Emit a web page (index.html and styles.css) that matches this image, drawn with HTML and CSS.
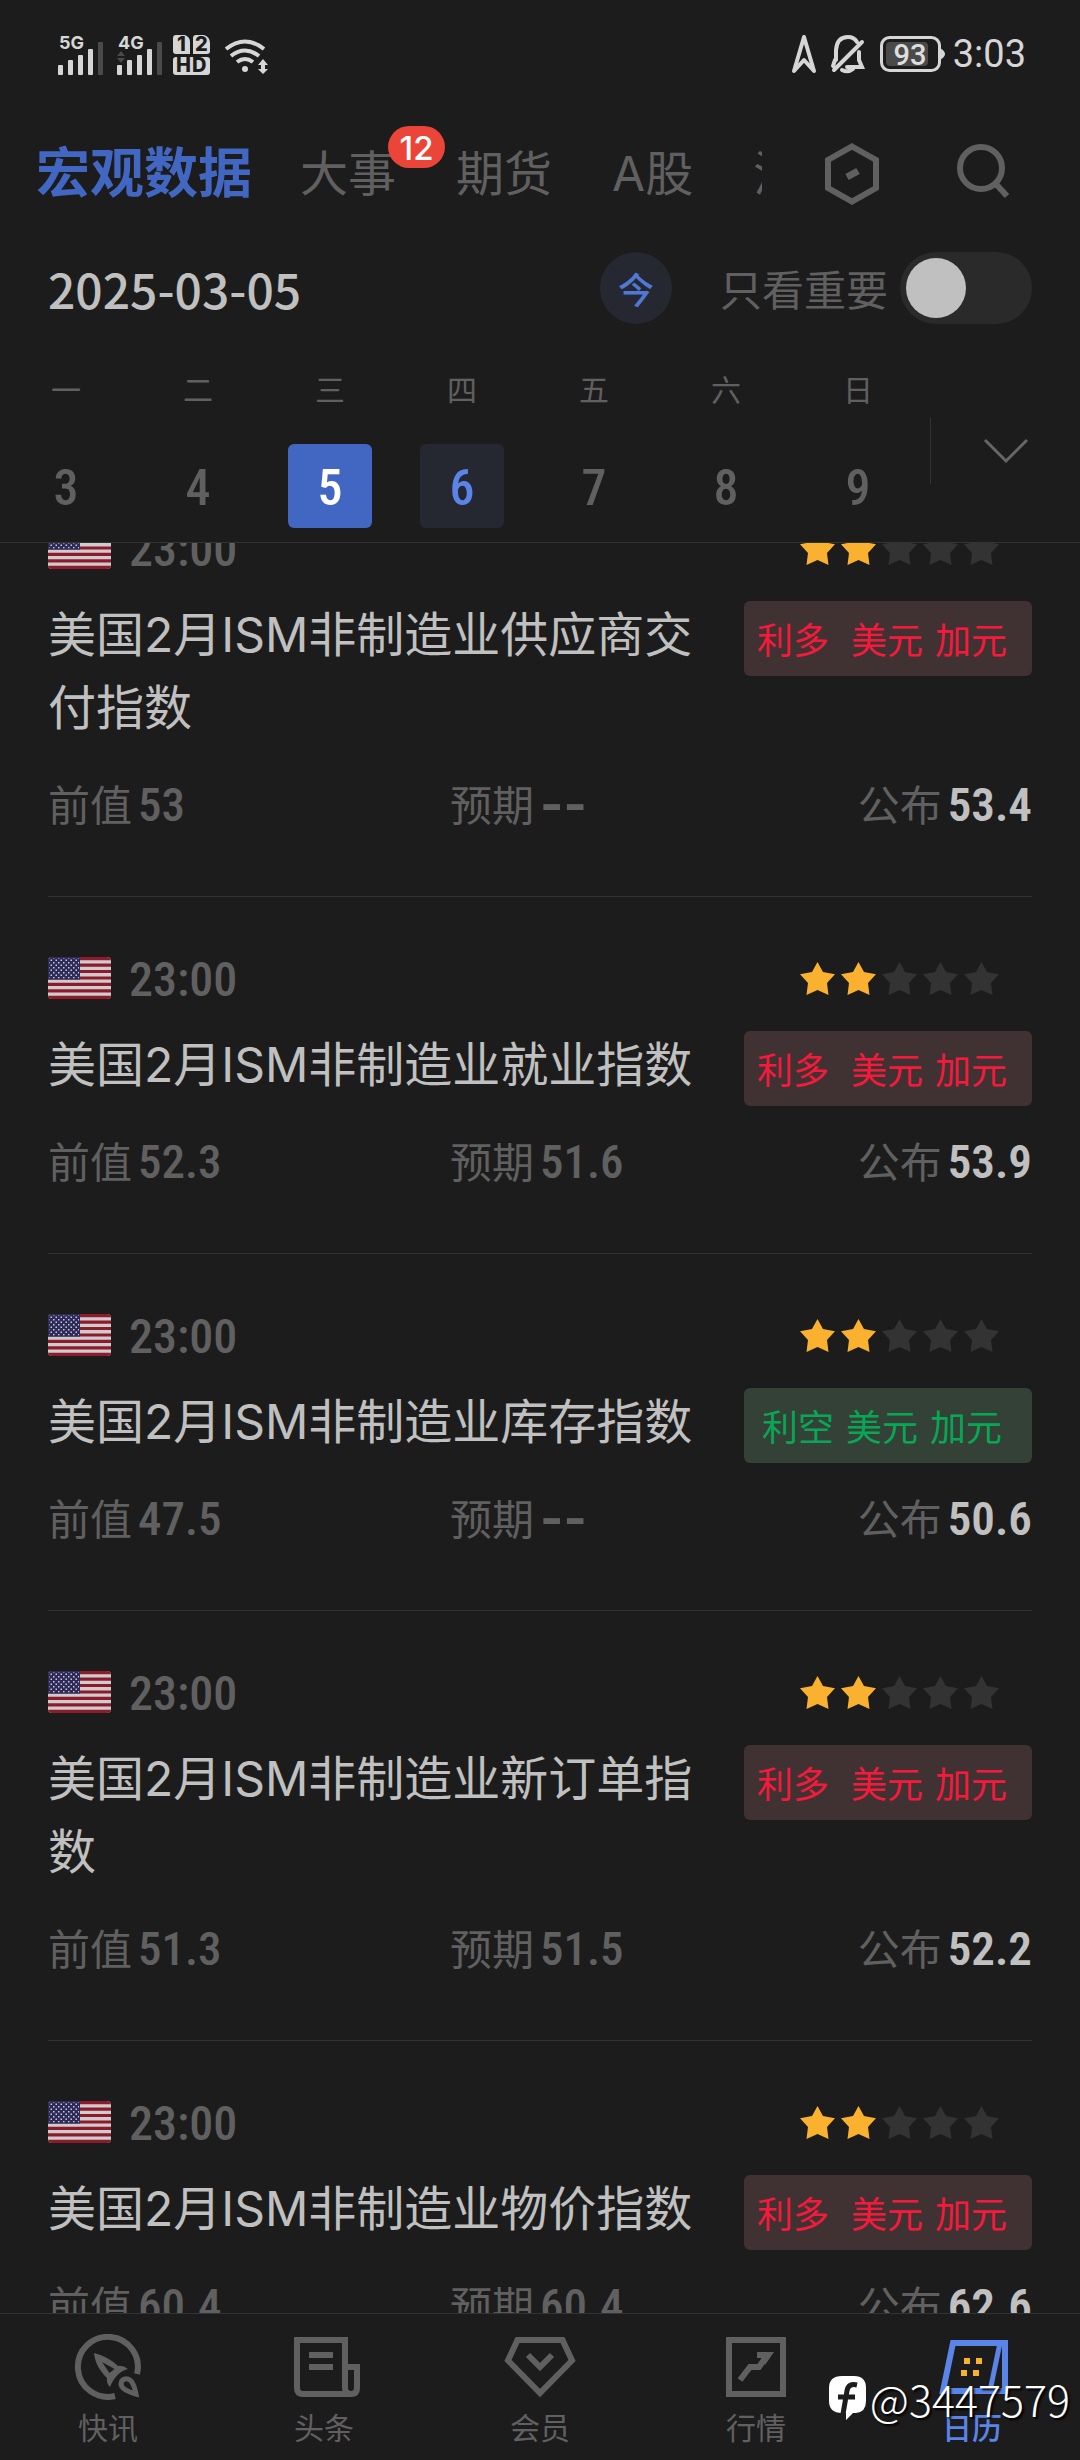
FILE: index.html
```html
<!DOCTYPE html>
<html lang="zh-CN">
<head>
<meta charset="utf-8">
<meta name="viewport" content="width=device-width, initial-scale=1">
<title>财经日历</title>
<link rel="stylesheet" href="styles.css">
</head>
<body>
<svg class="defs" aria-hidden="true">
  <defs>
    <pattern id="dots" width="5" height="5" patternUnits="userSpaceOnUse">
      <rect x="0" y="0" width="1.500" height="1.500" fill="#c9c8d4"/>
      <rect x="2.500" y="2.500" width="1.500" height="1.500" fill="#c9c8d4"/>
    </pattern>
    <symbol id="flag" viewBox="0 0 63 42">
      <rect width="63" height="42" fill="#cfcccf"/>
      <path fill="#8e1b2b" d="M0 0h63v3.2H0zM0 6.5h63v3.2H0zM0 12.9h63v3.2H0zM0 19.4h63v3.2H0zM0 25.8h63v3.2H0zM0 32.3h63v3.2H0zM0 38.8h63V42H0z"/>
      <rect width="32" height="22.6" fill="#2d2b59"/>
      <rect x="1" y="1" width="30" height="20.600" fill="url(#dots)"/>
    </symbol>
    <symbol id="star" viewBox="0 0 35 33">
      <path fill="currentColor" d="M17.500 0 23 10 35 12.300 27 21 28.500 33 17.500 28 6.500 33 8 21 0 12.300 12 10Z"/>
    </symbol>
    <symbol id="rating" viewBox="0 0 199 33">
      <use href="#star" x="0" width="35" height="33" color="#fab12f"/>
      <use href="#star" x="41" width="35" height="33" color="#fab12f"/>
      <use href="#star" x="82" width="35" height="33" color="#333"/>
      <use href="#star" x="123" width="35" height="33" color="#333"/>
      <use href="#star" x="164" width="35" height="33" color="#333"/>
    </symbol>
  </defs>
</svg>

<header class="header">
  <div class="status">
    <svg class="status-left" width="212" height="44" viewBox="0 0 212 44" aria-hidden="true">
      <g fill="#d6d6d6">
        <text class="net" x="1" y="17">5G</text>
        <rect x="0" y="33" width="5" height="10" rx="1"/><rect x="10" y="28" width="5" height="15" rx="1"/><rect x="20" y="23" width="5" height="20" rx="1"/><rect x="30" y="17" width="5" height="26" rx="1"/>
        <text class="net" x="60" y="17">4G</text>
        <rect x="59" y="33" width="5" height="10" rx="1"/><rect x="69" y="28" width="5" height="15" rx="1"/><rect x="79" y="23" width="5" height="20" rx="1"/><rect x="89" y="17" width="5" height="26" rx="1"/>
        <path d="M118 3h9q5 2 5 7v12h-14q-3 0-3-3V6q0-3 3-3zM138 3h8q6 2 6 8v8q0 3-3 3h-14V6q0-3 3-3z"/>
        <rect x="115" y="25" width="37" height="18" rx="3"/>
        <circle cx="187" cy="37" r="3"/>
        <path d="M205 27l5 6h-3v4h3l-5 5-5-5h3v-4h-3z"/>
      </g>
      <g fill="#4a4a4a"><rect x="40" y="10" width="5" height="33" rx="1"/><rect x="99" y="10" width="5" height="33" rx="1"/><path d="M63 19l4 5h-8zM63 31l4-5h-8z"/></g>
      <g fill="none" stroke="#d6d6d6" stroke-width="4"><path d="M168 17q19-15 38 0M173 24q14-11 28 0M179 30q8-6 16 0"/></g>
      <g class="sim" fill="#1c1c1c"><text x="119" y="19">1</text><text x="137" y="19">2</text><text x="118" y="40">H</text><text x="134" y="40">D</text></g>
    </svg>
    <div class="status-right">
      <svg width="24" height="38" viewBox="0 0 24 38" fill="none" stroke="#d6d6d6" stroke-width="4" stroke-linejoin="round" aria-hidden="true"><path d="M12 2 2 36l10-11 10 11z"/></svg>
      <svg width="34" height="38" viewBox="0 0 34 38" fill="none" stroke="#d6d6d6" stroke-width="4" stroke-linecap="round" aria-hidden="true"><path d="M5 25V15Q6 2 17 2q6 0 9 5M28 17v8l3 7H16M4 25l-2 6M3 35 31 7M11 35q6 3 11-1"/></svg>
      <svg width="64" height="38" viewBox="0 0 64 38" aria-hidden="true">
        <rect x="1.500" y="2.500" width="58" height="33" rx="8" fill="none" stroke="#d6d6d6" stroke-width="3"/>
        <rect x="6" y="7" width="42" height="24" rx="4" fill="#4a4a4a"/>
        <path d="M60 13q5 3 5 6t-5 6z" fill="#d6d6d6"/>
        <text class="battery" x="30" y="30" text-anchor="middle" fill="#dedede">93</text>
      </svg>
      <time class="clock">3:03</time>
    </div>
  </div>

  <div class="topbar">
    <nav class="tabs">
      <a class="tab tab-active" href="#macro">宏观数据</a>
      <a class="tab" href="#events">大事<span class="badge">12</span></a>
      <a class="tab" href="#futures">期货</a>
      <a class="tab" href="#a">A股</a>
      <a class="tab" href="#hs">沪深</a>
    </nav>
    <div class="actions">
      <button class="icon-btn" aria-label="设置"><svg width="66" height="66" viewBox="0 0 66 66" fill="none" stroke="#606060" stroke-width="6"><path d="M33 5.500 57 19v28L33 60.500 9 47V19z"/><path stroke-width="7" d="M28 36l11-6"/></svg></button>
      <button class="icon-btn" aria-label="搜索"><svg width="66" height="66" viewBox="0 0 66 66" fill="none" stroke="#606060" stroke-width="6"><circle cx="30" cy="27" r="21"/><path d="M44 42l12 13"/></svg></button>
    </div>
  </div>

  <div class="datebar">
    <time class="date" datetime="2025-03-05">2025-03-05</time>
    <button class="today">今</button>
    <label class="only" for="only">只看重要</label>
    <input class="switch" id="only" type="checkbox">
  </div>

  <div class="calendar">
    <div class="week">
      <div class="day"><span class="weekday">一</span><button class="num">3</button></div>
      <div class="day"><span class="weekday">二</span><button class="num">4</button></div>
      <div class="day"><span class="weekday">三</span><button class="num num-selected">5</button></div>
      <div class="day"><span class="weekday">四</span><button class="num num-today">6</button></div>
      <div class="day"><span class="weekday">五</span><button class="num">7</button></div>
      <div class="day"><span class="weekday">六</span><button class="num">8</button></div>
      <div class="day"><span class="weekday">日</span><button class="num">9</button></div>
    </div>
    <button class="expand" aria-label="展开"><svg width="46" height="26" viewBox="0 0 46 26" fill="none" stroke="#666" stroke-width="3"><path d="M2 2l21 21L44 2"/></svg></button>
  </div>
</header>

<main class="viewport">
  <div class="list">
    <article class="item">
      <div class="head"><svg class="flag" role="img" aria-label="美国"><use href="#flag"/></svg><time class="time">23:00</time><svg class="stars" role="img" aria-label="2"><use href="#rating"/></svg></div>
      <div class="body"><h2 class="title">美国2月ISM非制造业供应商交付指数</h2><div class="tag tag-up"><span class="verdict">利多</span><span>美元</span><span>加元</span></div></div>
      <dl class="meta"><div><dt>前值</dt><dd>53</dd></div><div><dt>预期</dt><dd class="none">--</dd></div><div class="actual"><dt>公布</dt><dd>53.4</dd></div></dl>
    </article>
    <article class="item">
      <div class="head"><svg class="flag" role="img" aria-label="美国"><use href="#flag"/></svg><time class="time">23:00</time><svg class="stars" role="img" aria-label="2"><use href="#rating"/></svg></div>
      <div class="body"><h2 class="title">美国2月ISM非制造业就业指数</h2><div class="tag tag-up"><span class="verdict">利多</span><span>美元</span><span>加元</span></div></div>
      <dl class="meta"><div><dt>前值</dt><dd>52.3</dd></div><div><dt>预期</dt><dd>51.6</dd></div><div class="actual"><dt>公布</dt><dd>53.9</dd></div></dl>
    </article>
    <article class="item">
      <div class="head"><svg class="flag" role="img" aria-label="美国"><use href="#flag"/></svg><time class="time">23:00</time><svg class="stars" role="img" aria-label="2"><use href="#rating"/></svg></div>
      <div class="body"><h2 class="title">美国2月ISM非制造业库存指数</h2><div class="tag tag-down"><span class="verdict">利空</span><span>美元</span><span>加元</span></div></div>
      <dl class="meta"><div><dt>前值</dt><dd>47.5</dd></div><div><dt>预期</dt><dd class="none">--</dd></div><div class="actual"><dt>公布</dt><dd>50.6</dd></div></dl>
    </article>
    <article class="item">
      <div class="head"><svg class="flag" role="img" aria-label="美国"><use href="#flag"/></svg><time class="time">23:00</time><svg class="stars" role="img" aria-label="2"><use href="#rating"/></svg></div>
      <div class="body"><h2 class="title">美国2月ISM非制造业新订单指数</h2><div class="tag tag-up"><span class="verdict">利多</span><span>美元</span><span>加元</span></div></div>
      <dl class="meta"><div><dt>前值</dt><dd>51.3</dd></div><div><dt>预期</dt><dd>51.5</dd></div><div class="actual"><dt>公布</dt><dd>52.2</dd></div></dl>
    </article>
    <article class="item">
      <div class="head"><svg class="flag" role="img" aria-label="美国"><use href="#flag"/></svg><time class="time">23:00</time><svg class="stars" role="img" aria-label="2"><use href="#rating"/></svg></div>
      <div class="body"><h2 class="title">美国2月ISM非制造业物价指数</h2><div class="tag tag-up"><span class="verdict">利多</span><span>美元</span><span>加元</span></div></div>
      <dl class="meta"><div><dt>前值</dt><dd>60.4</dd></div><div><dt>预期</dt><dd>60.4</dd></div><div class="actual"><dt>公布</dt><dd>62.6</dd></div></dl>
    </article>
  </div>
</main>

<nav class="dock">
  <a class="dock-item" href="#flash"><svg width="72" height="66" viewBox="0 0 72 66" fill="none" stroke="currentColor" stroke-width="6"><path d="M65 40A30 30 0 1 0 43 62"/><path fill="currentColor" fill-rule="evenodd" stroke="none" d="M22 19C33 22 41 27 46 32Q51 31 56 35C48 37 42 43 38 53Q34 49 35 44C29 38 23 30 22 19ZM30 28 37.500 39 42.500 35Z"/><path stroke-width="5" d="M64 60C57 58 49 55 49 50 49 45 55 43 59 47 62 50 63 55 64 60Z"/></svg><span>快讯</span></a>
  <a class="dock-item" href="#news"><svg width="72" height="66" viewBox="0 0 72 66" fill="none" stroke="currentColor" stroke-width="6"><path d="M9 6h48v48q0 6 6 6 6 0 6-6V33H57M9 3v51q0 6 6 6h48M21 21h24M21 33h24"/></svg><span>头条</span></a>
  <a class="dock-item" href="#member"><svg width="72" height="66" viewBox="0 0 72 66" fill="none" stroke="currentColor" stroke-width="6"><path d="M13.500 6h45l9.500 20.500L36 59 4 26.500zM24 21l12 12 12-12"/></svg><span>会员</span></a>
  <a class="dock-item" href="#quotes"><svg width="72" height="66" viewBox="0 0 72 66" fill="none" stroke="currentColor" stroke-width="6"><path d="M9 6h54v54H9zM20 46l10-13h9l7-10"/><path fill="currentColor" stroke="none" d="M37 18h17L45 31v-7h-8z"/></svg><span>行情</span></a>
  <a class="dock-item dock-active" href="#calendar"><svg width="72" height="66" viewBox="0 0 72 66" fill="none" stroke="currentColor" stroke-width="6"><path d="M69 6v51H7L17 9h52"/><path stroke-width="5" d="M64 9 54 57"/><path fill="#fab12f" stroke="none" d="M28 24h6v6h-6zM40 24h6v6h-6zM25 36h6v6h-6zM37 36h6v6h-6z"/></svg><span>日历</span></a>
  <div class="watermark"><svg width="37" height="44" viewBox="0 0 37 44" aria-hidden="true"><path fill="#fff" d="M13 0h12q12 0 12 12v13q0 11-10 12h-3l-7 7v-7h-4Q0 37 0 25V12Q0 0 13 0z"/><path fill="none" stroke="#1c1c1c" stroke-width="5" d="M28 9q-9-2-10 6l-4 23M9 21h17"/></svg><span>@3447579</span></div>
</nav>
</body>
</html>
```
FILE: styles.css
```css
* { box-sizing: border-box; }

body {
  margin: 0;
  min-height: 100vh;
  height: 100vh;
  display: flex;
  flex-direction: column;
  background: #1c1c1c;
  color: #606060;
  font-family: "Noto Sans CJK SC", sans-serif;
}

button {
  margin: 0;
  padding: 0;
  border: 0;
  background: none;
  color: inherit;
  font: inherit;
}

a { color: inherit; text-decoration: none; }
svg { display: block; }
.defs { position: absolute; width: 0; height: 0; }

.header { flex: none; border-bottom: 1px solid #333; }

/* Status bar */
.status {
  display: flex;
  justify-content: space-between;
  align-items: center;
  height: 108px;
  padding: 0 54px 0 58px;
}
.status-right { display: flex; align-items: center; gap: 15px; }
.status-right svg { overflow: visible; }
.net { font: 700 18px Inter, sans-serif; }
.sim { font: 800 20px Inter, sans-serif; }
.battery { font: 500 29px Roboto, sans-serif; }
.clock { font: 400 38px/44px Roboto, sans-serif; color: #d6d6d6; margin-left: -6px; }

/* Section tabs */
.topbar { display: flex; align-items: center; height: 132px; }
.tabs {
  display: flex;
  flex: 1;
  align-items: center;
  height: 132px;
  overflow: hidden;
  white-space: nowrap;
}
.tab {
  position: relative;
  flex: none;
  padding: 0 30px;
  font-family: Inter, "Noto Sans CJK SC", sans-serif;
  font-size: 48px;
  line-height: 76px;
}
.tab-active {
  padding: 0 18px 0 36px;
  font-size: 54px;
  font-weight: 700;
  color: #4267c2;
}
.badge {
  position: absolute;
  top: -10px;
  left: 118px;
  width: 57px;
  height: 42px;
  border-radius: 21px;
  background: #eb4439;
  color: #fff;
  font-size: 33px;
  font-weight: 500;
  line-height: 44px;
  text-align: center;
}
.actions { display: flex; gap: 66px; padding: 0 63px 0 57px; }

/* Date and filter */
.datebar {
  display: flex;
  align-items: center;
  height: 72px;
  margin-top: 12px;
  padding: 0 48px;
}
.date { font-size: 48px; font-weight: 500; line-height: 70px; color: #c0c0c0; }
.today {
  width: 72px;
  height: 72px;
  margin-left: auto;
  border-radius: 36px;
  background: #252831;
  color: #5079d6;
  font-size: 36px;
  font-weight: 500;
  line-height: 70px;
}
.only { margin: 0 12px 0 48px; font-size: 42px; line-height: 70px; }
.switch {
  appearance: none;
  display: flex;
  width: 132px;
  height: 72px;
  margin: 0;
  padding: 6px;
  border-radius: 36px;
  background: #2a2a2a;
}
.switch::before {
  content: "";
  width: 60px;
  height: 60px;
  border-radius: 30px;
  background: #c0c0c0;
}
.switch:checked { justify-content: flex-end; background: #4267c2; }

/* Week strip */
.calendar { display: flex; align-items: center; padding: 49px 0 14px; }
.week { display: flex; flex: 1; padding-right: 6px; }
.day { flex: 1; display: flex; flex-direction: column; align-items: center; gap: 41px; }
.weekday { font-size: 30px; line-height: 30px; }
.num {
  width: 84px;
  height: 84px;
  border-radius: 6px;
  font: 500 50px/88px "Roboto Condensed", Roboto, sans-serif;
}
.num-selected { background: #4267c2; color: #fff; }
.num-today { background: #252831; color: #5a84e8; }
.expand {
  display: flex;
  align-items: center;
  justify-content: center;
  width: 150px;
  height: 66px;
  border-left: 1px solid #333;
}

/* Event list, scrolled part-way into its first entry */
.viewport { flex: 1; min-height: 0; overflow: hidden; padding: 0 48px; }
.list { margin-top: -76px; }
.item { padding: 60px 0 68px; border-bottom: 1px solid #333; }
.head { display: flex; align-items: center; height: 42px; margin-bottom: 29px; }
.flag { width: 63px; height: 42px; border-radius: 4px; }
.time {
  margin-left: 18px;
  padding-top: 4px;
  font: 500 48px/42px "Roboto Condensed", Roboto, sans-serif;
}
.stars { width: 199px; height: 33px; margin: 0 33px 0 auto; }
.body { display: flex; gap: 48px; align-items: flex-start; }
.title {
  flex: 1;
  margin: 0;
  font: 400 48px/73px Inter, "Noto Sans CJK SC", sans-serif;
  color: #c0c0c0;
}
/* The tag is taller than a title line; the negative margin keeps one-line rows tight */
.tag {
  display: flex;
  flex: none;
  justify-content: center;
  gap: 12px;
  width: 288px;
  height: 75px;
  margin: 3px 0 -5px;
  padding-right: 12px;
  border-radius: 6px;
  font-size: 36px;
  line-height: 75px;
}
.tag-up { background: #403232; color: #f5193b; }
.tag-up .verdict { margin-right: 10px; }
.tag-down { background: #344136; color: #08a655; }
.meta {
  display: grid;
  grid-template-columns: 402fr 406fr 176fr;
  margin: 36px 0 0;
  font-size: 42px;
  line-height: 45px;
}
.meta div { display: flex; gap: 6px; height: 48px; }
.meta dd {
  margin: 0;
  font: 500 47px/50px "Roboto Condensed", Roboto, sans-serif;
}
.meta .none { font: 700 50px/48px Inter, sans-serif; }
.meta .actual { justify-content: flex-end; }
.meta .actual dd { color: #c0c0c0; font-weight: 600; }

/* Bottom navigation */
.dock {
  position: relative;
  display: flex;
  flex: none;
  height: 147px;
  border-top: 1px solid #333;
}
.dock-item {
  flex: 1;
  display: flex;
  flex-direction: column;
  align-items: center;
  gap: 8px;
  padding-top: 20px;
  font-size: 30px;
  line-height: 36px;
}
.dock-active { color: #5a84e8; font-weight: 500; }
.watermark {
  position: absolute;
  top: 57px;
  right: 10px;
  display: flex;
  align-items: center;
  gap: 4px;
  color: #fff;
  font-size: 43px;
  font-weight: 300;
  line-height: 54px;
  text-shadow: 2px 2px 2px #000;
}
```
